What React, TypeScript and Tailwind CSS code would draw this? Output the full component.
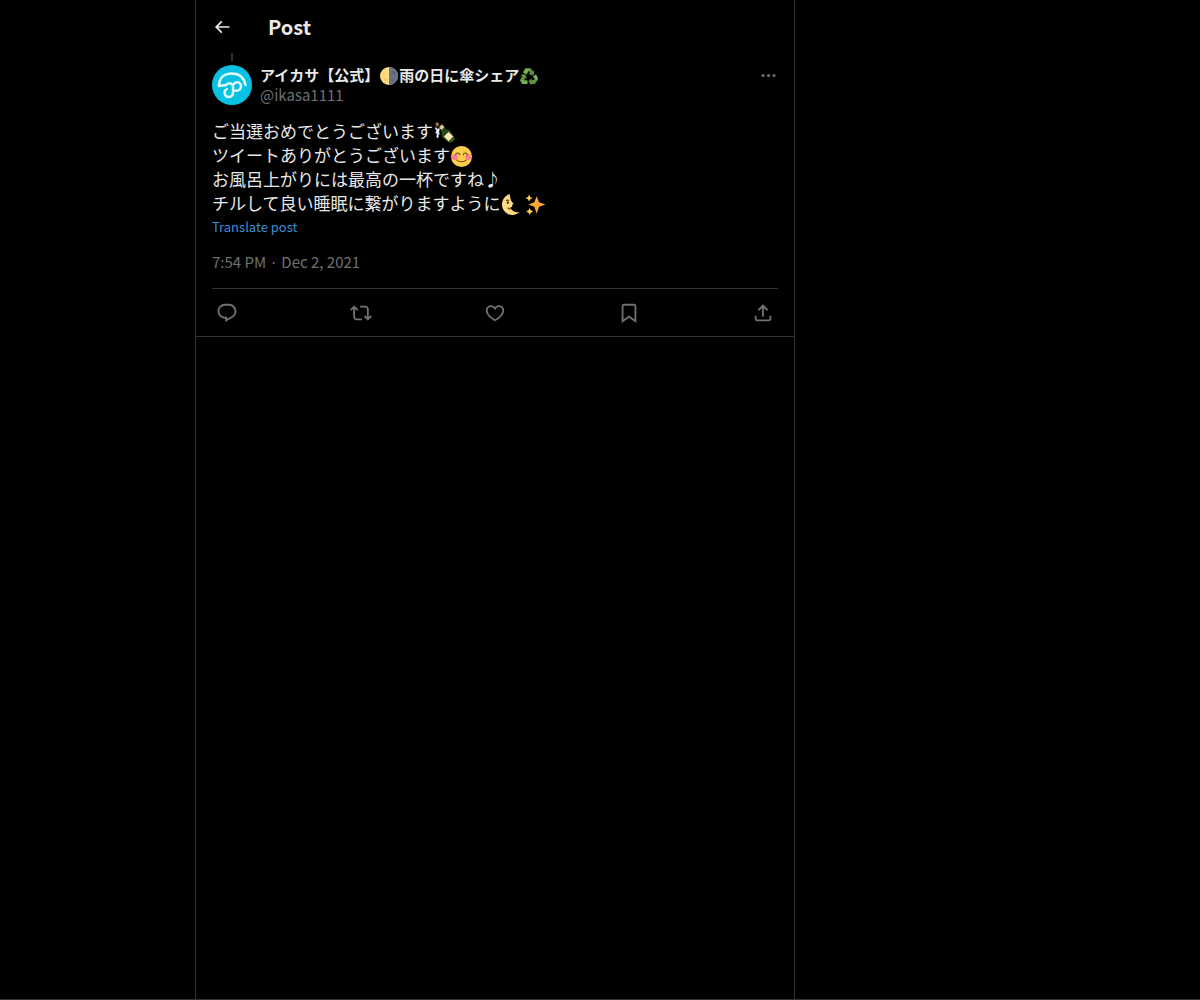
import React, { type ReactNode } from "react";

const ICONS = {
  back: "M7.414 13l5.043 5.04-1.414 1.42L3.586 12l7.457-7.46 1.414 1.42L7.414 11H21v2H7.414z",
  more: "M3 12c0-1.1.9-2 2-2s2 .9 2 2-.9 2-2 2-2-.9-2-2zm9 2c1.1 0 2-.9 2-2s-.9-2-2-2-2 .9-2 2 .9 2 2 2zm7 0c1.1 0 2-.9 2-2s-.9-2-2-2-2 .9-2 2 .9 2 2 2z",
  reply:
    "M1.751 10c0-4.42 3.584-8 8.005-8h4.366c4.49 0 8.129 3.64 8.129 8.13 0 2.96-1.607 5.68-4.196 7.11l-8.054 4.46v-3.69h-.067c-4.49.1-8.183-3.51-8.183-8.01zm8.005-6c-3.317 0-6.005 2.69-6.005 6 0 3.37 2.77 6.08 6.138 6.01l.351-.01h1.761v2.3l5.087-2.81c1.951-1.08 3.163-3.13 3.163-5.36 0-3.39-2.744-6.13-6.129-6.13H9.756z",
  repost:
    "M4.5 3.88l4.432 4.14-1.364 1.46L5.5 7.55V16c0 1.1.896 2 2 2H13v2H7.5c-2.209 0-4-1.79-4-4V7.55L1.432 9.48.068 8.02 4.5 3.88zM16.5 6H11V4h5.5c2.209 0 4 1.79 4 4v8.45l2.068-1.93 1.364 1.46-4.432 4.14-4.432-4.14 1.364-1.46 2.068 1.93V8c0-1.1-.896-2-2-2z",
  like: "M16.697 5.5c-1.222-.06-2.679.51-3.89 2.16l-.805 1.09-.806-1.09C9.984 6.01 8.526 5.44 7.304 5.5c-1.243.07-2.349.78-2.91 1.91-.552 1.12-.633 2.78.479 4.82 1.074 1.97 3.257 4.27 7.129 6.61 3.87-2.34 6.052-4.64 7.126-6.61 1.111-2.04 1.03-3.7.477-4.82-.561-1.13-1.666-1.84-2.908-1.91zm4.187 7.69c-1.351 2.48-4.001 5.12-8.379 7.67l-.503.3-.504-.3c-4.379-2.55-7.029-5.19-8.382-7.67-1.36-2.5-1.41-4.86-.514-6.67.887-1.79 2.647-2.91 4.601-3.01 1.651-.09 3.368.56 4.798 2.01 1.429-1.45 3.146-2.1 4.796-2.01 1.954.1 3.714 1.22 4.601 3.01.896 1.81.846 4.17-.514 6.67z",
  bookmark:
    "M4 4.5C4 3.12 5.119 2 6.5 2h11C18.881 2 20 3.12 20 4.5v18.44l-8-5.71-8 5.71V4.5zM6.5 4c-.276 0-.5.22-.5.5v14.56l6-4.29 6 4.29V4.5c0-.28-.224-.5-.5-.5h-11z",
  share:
    "M12 2.59l5.7 5.7-1.41 1.42L13 6.41V16h-2V6.41l-3.3 3.3-1.41-1.42L12 2.59zM21 15l-.02 3.51c0 1.38-1.12 2.49-2.5 2.49H5.5C4.11 21 3 19.88 3 18.5V15h2v3.5c0 .28.22.5.5.5h12.98c.28 0 .5-.22.5-.5L19 15h2z"
};

type IconName = keyof typeof ICONS;

const ACTIONS: { icon: IconName; label: string }[] = [
  { icon: "reply", label: "Reply" },
  { icon: "repost", label: "Repost" },
  { icon: "like", label: "Like" },
  { icon: "bookmark", label: "Bookmark" },
  { icon: "share", label: "Share post" }
];

function IconButton({ icon, label, className }: { icon: IconName; label: string; className: string }) {
  return (
    <button type="button" aria-label={label} className="shrink-0 cursor-pointer">
      <svg viewBox="0 0 24 24" fill="currentColor" className={className} aria-hidden="true">
        <path d={ICONS[icon]} />
      </svg>
    </button>
  );
}

function Emoji({ label, small, children }: { label: string; small?: boolean; children: ReactNode }) {
  return (
    <svg
      viewBox="0 0 36 36"
      role="img"
      aria-label={label}
      className={
        small
          ? "mx-px inline-block size-[18px] align-[-4px]"
          : "mx-px inline-block size-[21px] align-[-5px]"
      }
    >
      {children}
    </svg>
  );
}

function HalfMoon() {
  return (
    <Emoji label="🌗" small>
      <circle cx="18" cy="18" r="18" fill="#ffd983" />
      <path d="M18 0a18 18 0 0 1 0 36z" fill="#66757f" />
      <circle cx="11" cy="25" r="3" fill="#ffcc4d" />
      <circle cx="7" cy="14" r="2.5" fill="#ffcc4d" />
      <circle cx="27" cy="12" r="3.5" fill="#5b6876" />
      <circle cx="25" cy="26" r="2.5" fill="#5b6876" />
    </Emoji>
  );
}

function Recycle() {
  return (
    <Emoji label="♻️" small>
      <path d="M11 3h11l4 6 3-2-2 10-10-3 3-2-3-5-4 5-6-4z" fill="#5c913b" />
      <path d="M11 3h9l-7 12-7-4z" fill="#77b255" />
      <path d="M1 16l9-2 4 9-3-1-3 5h6v7H5l-5-8 4-7z" fill="#5c913b" />
      <path d="M8 27h7v7H5l-5-8z" fill="#77b255" />
      <path d="M26 19l6-4 4 8-6 11h-7v3l-6-8 6-7v4h5l2-3z" fill="#5c913b" />
      <path d="M26 19l6-4 4 8-3 6z" fill="#77b255" />
    </Emoji>
  );
}

function Bottle() {
  return (
    <Emoji label="🍾">
      <path d="M2 2l4-2 3 3-1 4-4 1z" fill="#a0604b" />
      <path d="M1 10l3-1 2 3 3-2 1 4-2 2 2 4-3 3v5l-3-2 1-5-3-3 2-3z" fill="#ccd6dd" />
      <path d="M5 12l3 1 1 4-3 2zM5 22l2-1 1 4-2 3z" fill="#fff" />
      <path d="M10 9l4-3 6 6 7 2 8 12c2 3-6 11-10 9L14 26l-1-7z" fill="#2b4a1c" />
      <path d="M9 8l5-4 4 5-4 4-4-1z" fill="#d9c98b" />
      <path d="M26 35l9-8c1 3-5 9-9 8z" fill="#3e721d" />
      <path d="M17 25l8-8 8 8-8 8z" fill="#ffe8b6" />
    </Emoji>
  );
}

function Smile() {
  return (
    <Emoji label="😊">
      <circle cx="18" cy="18" r="18" fill="#ffcc4d" />
      <circle cx="6.5" cy="19" r="5" fill="#ff7892" />
      <circle cx="29.5" cy="19" r="5" fill="#ff7892" />
      <g fill="none" stroke="#664500" strokeWidth="1.8" strokeLinecap="round">
        <path d="M8 15c1-4 6-4 7 0M21 15c1-4 6-4 7 0" />
        <path d="M10 24c4 4 12 4 16 0" />
      </g>
    </Emoji>
  );
}

function CrescentFace() {
  return (
    <Emoji label="🌜">
      <path
        d="M13 0C5 3 0 10 0 18c0 10 8 18 18 18 5 0 9-2 12-5-8 1-14-3-16-8l4-1-1-3 3-2-4-5c-2-4-2-8-3-12z"
        fill="#ffd983"
      />
      <path d="M7 12c1-2 4-2 5 0M10 23c1 2 3 3 5 2" fill="none" stroke="#664500" strokeWidth="2" />
      <circle cx="10" cy="15" r="2" fill="#292f33" />
    </Emoji>
  );
}

function Sparkles() {
  return (
    <Emoji label="✨">
      <path d="M20 4l4 10 11 4-11 4-4 12-4-12-10-4 10-4z" fill="#ffac33" />
      <path d="M7 1l2 4 4 2-4 2-2 4-2-4-4-2 4-2zM8 24l2 4 4 2-4 2-2 4-2-4-4-2 4-2z" fill="#ffcc4d" />
    </Emoji>
  );
}

function Avatar() {
  return (
    <a href="#profile" aria-label="アイカサ【公式】" className="shrink-0">
      <svg viewBox="0 0 40 40" className="size-10 rounded-full" aria-hidden="true">
        <rect width="40" height="40" fill="#08c1e3" />
        <g fill="none" stroke="#dffaff" strokeLinecap="round" strokeLinejoin="round">
          <path d="M14 20L7 21C7 13 12 8.500 20 8.500S32 13 33.500 20" strokeWidth="2.600" />
          <path
            d="M14 20c3-3 7-2 7 2v6a4.200 4.200 0 1 1-6-4M21 25c4 2 8 0 8-4s-5-5-7-2"
            strokeWidth="2.400"
          />
        </g>
      </svg>
    </a>
  );
}

export default function App() {
  return (
    <div className="grid min-h-screen grid-cols-[13fr_minmax(0,600px)_27fr] border-b border-[#333333] bg-black font-['Noto_Sans_CJK_JP',sans-serif] text-[#e7e9ea]">
      <main className="col-start-2 border-x border-[#333333]">
        <header className="flex h-[53px] items-center gap-9 px-4">
          <IconButton icon="back" label="Back" className="size-5" />
          <h1 className="text-xl font-bold">Post</h1>
        </header>

        <article className="border-b border-[#333333] px-4">
          {/* end of the thread line coming from the parent post */}
          <div className="flex h-3 w-10 justify-center pb-1">
            <div className="w-0.5 bg-[#333333]" />
          </div>

          <div className="flex items-start gap-2">
            <Avatar />
            <div className="min-w-0 flex-1 text-[15px] leading-5">
              <a href="#profile" className="block font-bold">
                アイカサ【公式】
                <HalfMoon />
                雨の日に傘シェア
                <Recycle />
              </a>
              <a href="#profile" className="block text-[#6f7173]">
                @ikasa1111
              </a>
            </div>
            <div className="flex h-5 items-center text-[#6f7173]">
              <IconButton icon="more" label="More" className="size-[19px]" />
            </div>
          </div>

          <p className="mt-3.5 text-[17px] leading-6">
            ご当選おめでとうございます
            <Bottle />
            <br />
            ツイートありがとうございます
            <Smile />
            <br />
            お風呂上がりには最高の一杯ですね♪
            <br />
            チルして良い睡眠に繋がりますように
            <CrescentFace />
            <Sparkles />
          </p>
          <button type="button" className="mt-1 block cursor-pointer text-[13px] leading-4 text-[#3a8fd9]">
            Translate post
          </button>

          <div className="mt-[17px] mb-4 text-[15px] leading-5 text-[#6f7173]">
            <a href="#post">7:54 PM · Dec 2, 2021</a>
          </div>

          <div className="flex h-12 items-center justify-between border-t border-[#333333] px-1 text-[#6f7173]">
            {ACTIONS.map((a) => (
              <IconButton key={a.icon} icon={a.icon} label={a.label} className="size-[22px]" />
            ))}
          </div>
        </article>
      </main>
    </div>
  );
}
